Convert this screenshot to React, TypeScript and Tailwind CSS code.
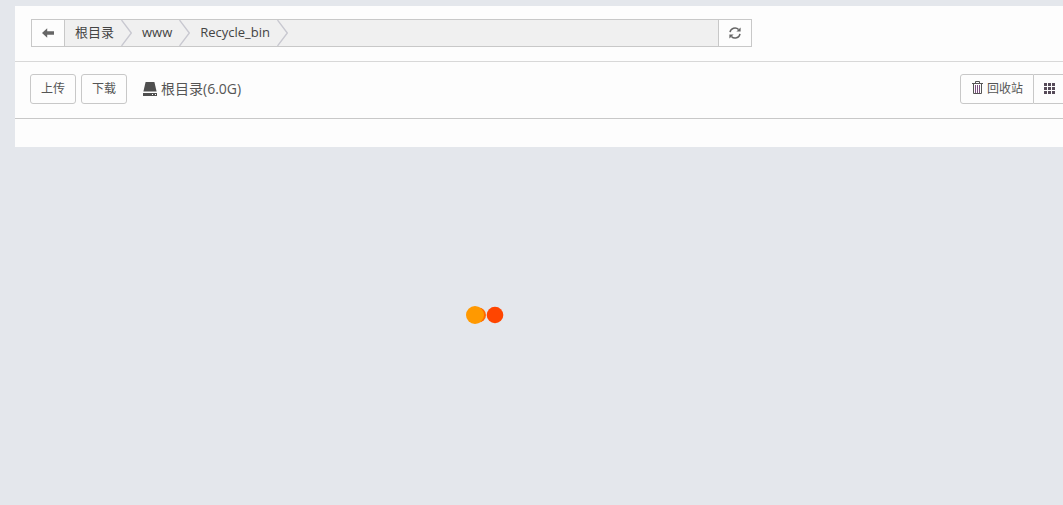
import { useState } from "react";

const crumbs = ["根目录", "www", "Recycle_bin"];

const ArrowLeftIcon = () => (
  <svg viewBox="0 0 12 10" className="h-[10px] w-3" fill="#666" aria-hidden="true">
    <path d="M0 5 5.2 0.2V3.3H12V6.7H5.2V9.8Z" />
  </svg>
);

const RefreshIcon = () => (
  <svg viewBox="0 0 12 12" className="size-3" fill="none" stroke="#666" strokeWidth="1.5" aria-hidden="true">
    <path d="M1 5.2A5 5 0 0 1 9.6 2.6" />
    <path d="M11 6.8A5 5 0 0 1 2.4 9.4" />
    <path d="M11.6 0.4V4.6H7.4Z" fill="#666" stroke="none" />
    <path d="M0.4 11.6V7.4H4.6Z" fill="#666" stroke="none" />
  </svg>
);

const DiskIcon = () => (
  <svg viewBox="0 0 14 14" className="size-[14px]" fill="#4f4f4f" aria-hidden="true">
    <path d="M2.6 0H11.4L13.6 9.6H0.4Z" />
    <path fillRule="evenodd" d="M0 11H14V14H0ZM9 12V13H10V12ZM12 12V13H13V12Z" />
  </svg>
);

const TrashIcon = () => (
  <svg viewBox="0 0 11 16" className="h-4 w-[11px]" fill="none" stroke="#555" aria-hidden="true">
    <path d="M3.5 2V0.5H7.5V2M0 2.5H11M1.5 3V12.5H9.5V3" />
    <path d="M3.5 4V12M5.5 4V12M7.5 4V12" stroke="#7b5080" />
  </svg>
);

const GridIcon = () => (
  <svg viewBox="0 0 11 14" className="h-[14px] w-[11px]" fill="#554a58" aria-hidden="true">
    <path d="M0 1H3V4H0ZM4 1H7V4H4ZM8 1H11V4H8ZM0 5H3V8H0ZM4 5H7V8H4ZM8 5H11V8H8ZM0 9H3V12H0ZM4 9H7V12H4ZM8 9H11V12H8Z" />
  </svg>
);

const Separator = () => (
  <svg viewBox="0 0 11 26" className="h-[26px] w-[11px]" fill="none" stroke="#c8c8d0" strokeWidth="1.3" aria-hidden="true">
    <path d="M0.5 0 10.3 13 0.5 26" />
  </svg>
);

const PathBar = () => (
  <nav className="flex h-7 w-[721px] max-w-full border border-[#c8c8c8] bg-[#f0f0f0]" aria-label="路径">
    <button
      type="button"
      aria-label="返回"
      className="flex w-[33px] items-center justify-center border-r border-[#c8c8c8] bg-[#fdfdfd]"
    >
      <ArrowLeftIcon />
    </button>
    <ol className="flex flex-1 text-[13px] text-[#444]">
      {crumbs.map((name) => (
        <li key={name} className="flex items-center gap-[7px] pl-[10px]">
          <a href="#">{name}</a>
          <Separator />
        </li>
      ))}
    </ol>
    <button
      type="button"
      aria-label="刷新"
      className="flex w-[33px] items-center justify-center border-l border-[#c8c8c8] bg-[#fdfdfd]"
    >
      <RefreshIcon />
    </button>
  </nav>
);

const Toolbar = ({ onToggle }: { onToggle: () => void }) => (
  <div className="flex items-center border-b border-[#c8c8c8] pt-3 pb-[14px] pl-[15px] text-xs text-[#555]">
    <div className="flex gap-[5px]">
      <button type="button" className="h-[30px] rounded-[3px] border border-[#c8c8c8] px-[10px]">
        上传
      </button>
      <button type="button" className="h-[30px] rounded-[3px] border border-[#c8c8c8] px-[10px]">
        下载
      </button>
    </div>
    <a href="#" className="ml-4 flex items-center gap-1 text-sm">
      <DiskIcon />
      根目录(6.0G)
    </a>
    {/* the view switch runs past the right edge of the panel */}
    <div className="-mr-1 ml-auto flex">
      <button
        type="button"
        className="flex h-[30px] items-center gap-1 rounded-l-[3px] border border-[#c8c8c8] pr-[10px] pl-[11px]"
      >
        <TrashIcon />
        回收站
      </button>
      <button
        type="button"
        aria-label="切换视图"
        onClick={onToggle}
        className="flex h-[30px] items-center border-y border-r border-[#c8c8c8] pr-[11px] pl-[10px]"
      >
        <GridIcon />
      </button>
    </div>
  </div>
);

const Loader = () => (
  <svg viewBox="0 0 38 18" className="h-[18px] w-[38px]" role="img" aria-label="加载中">
    <circle cx="12.5" cy="9" r="7.5" fill="#f60" />
    <circle cx="29" cy="9" r="8.3" fill="#ff4500" />
    <circle cx="9" cy="9" r="9" fill="#ff9900" />
  </svg>
);

const App = () => {
  const [loading, setLoading] = useState(true);

  return (
    <div className="min-h-screen overflow-hidden bg-[#e4e7ec] pt-[6px] font-['Open_Sans','Noto_Sans_CJK_SC',sans-serif]">
      <main className="ml-[15px] bg-[#fdfdfd] pb-7">
        <div className="border-b border-[#d8d8d8] px-4 pt-[13px] pb-[14px]">
          <PathBar />
        </div>
        <Toolbar onToggle={() => setLoading(!loading)} />
      </main>
      {loading && (
        <div className="flex justify-center pt-[159px] pr-[93px]">
          <Loader />
        </div>
      )}
    </div>
  );
};

export default App;
